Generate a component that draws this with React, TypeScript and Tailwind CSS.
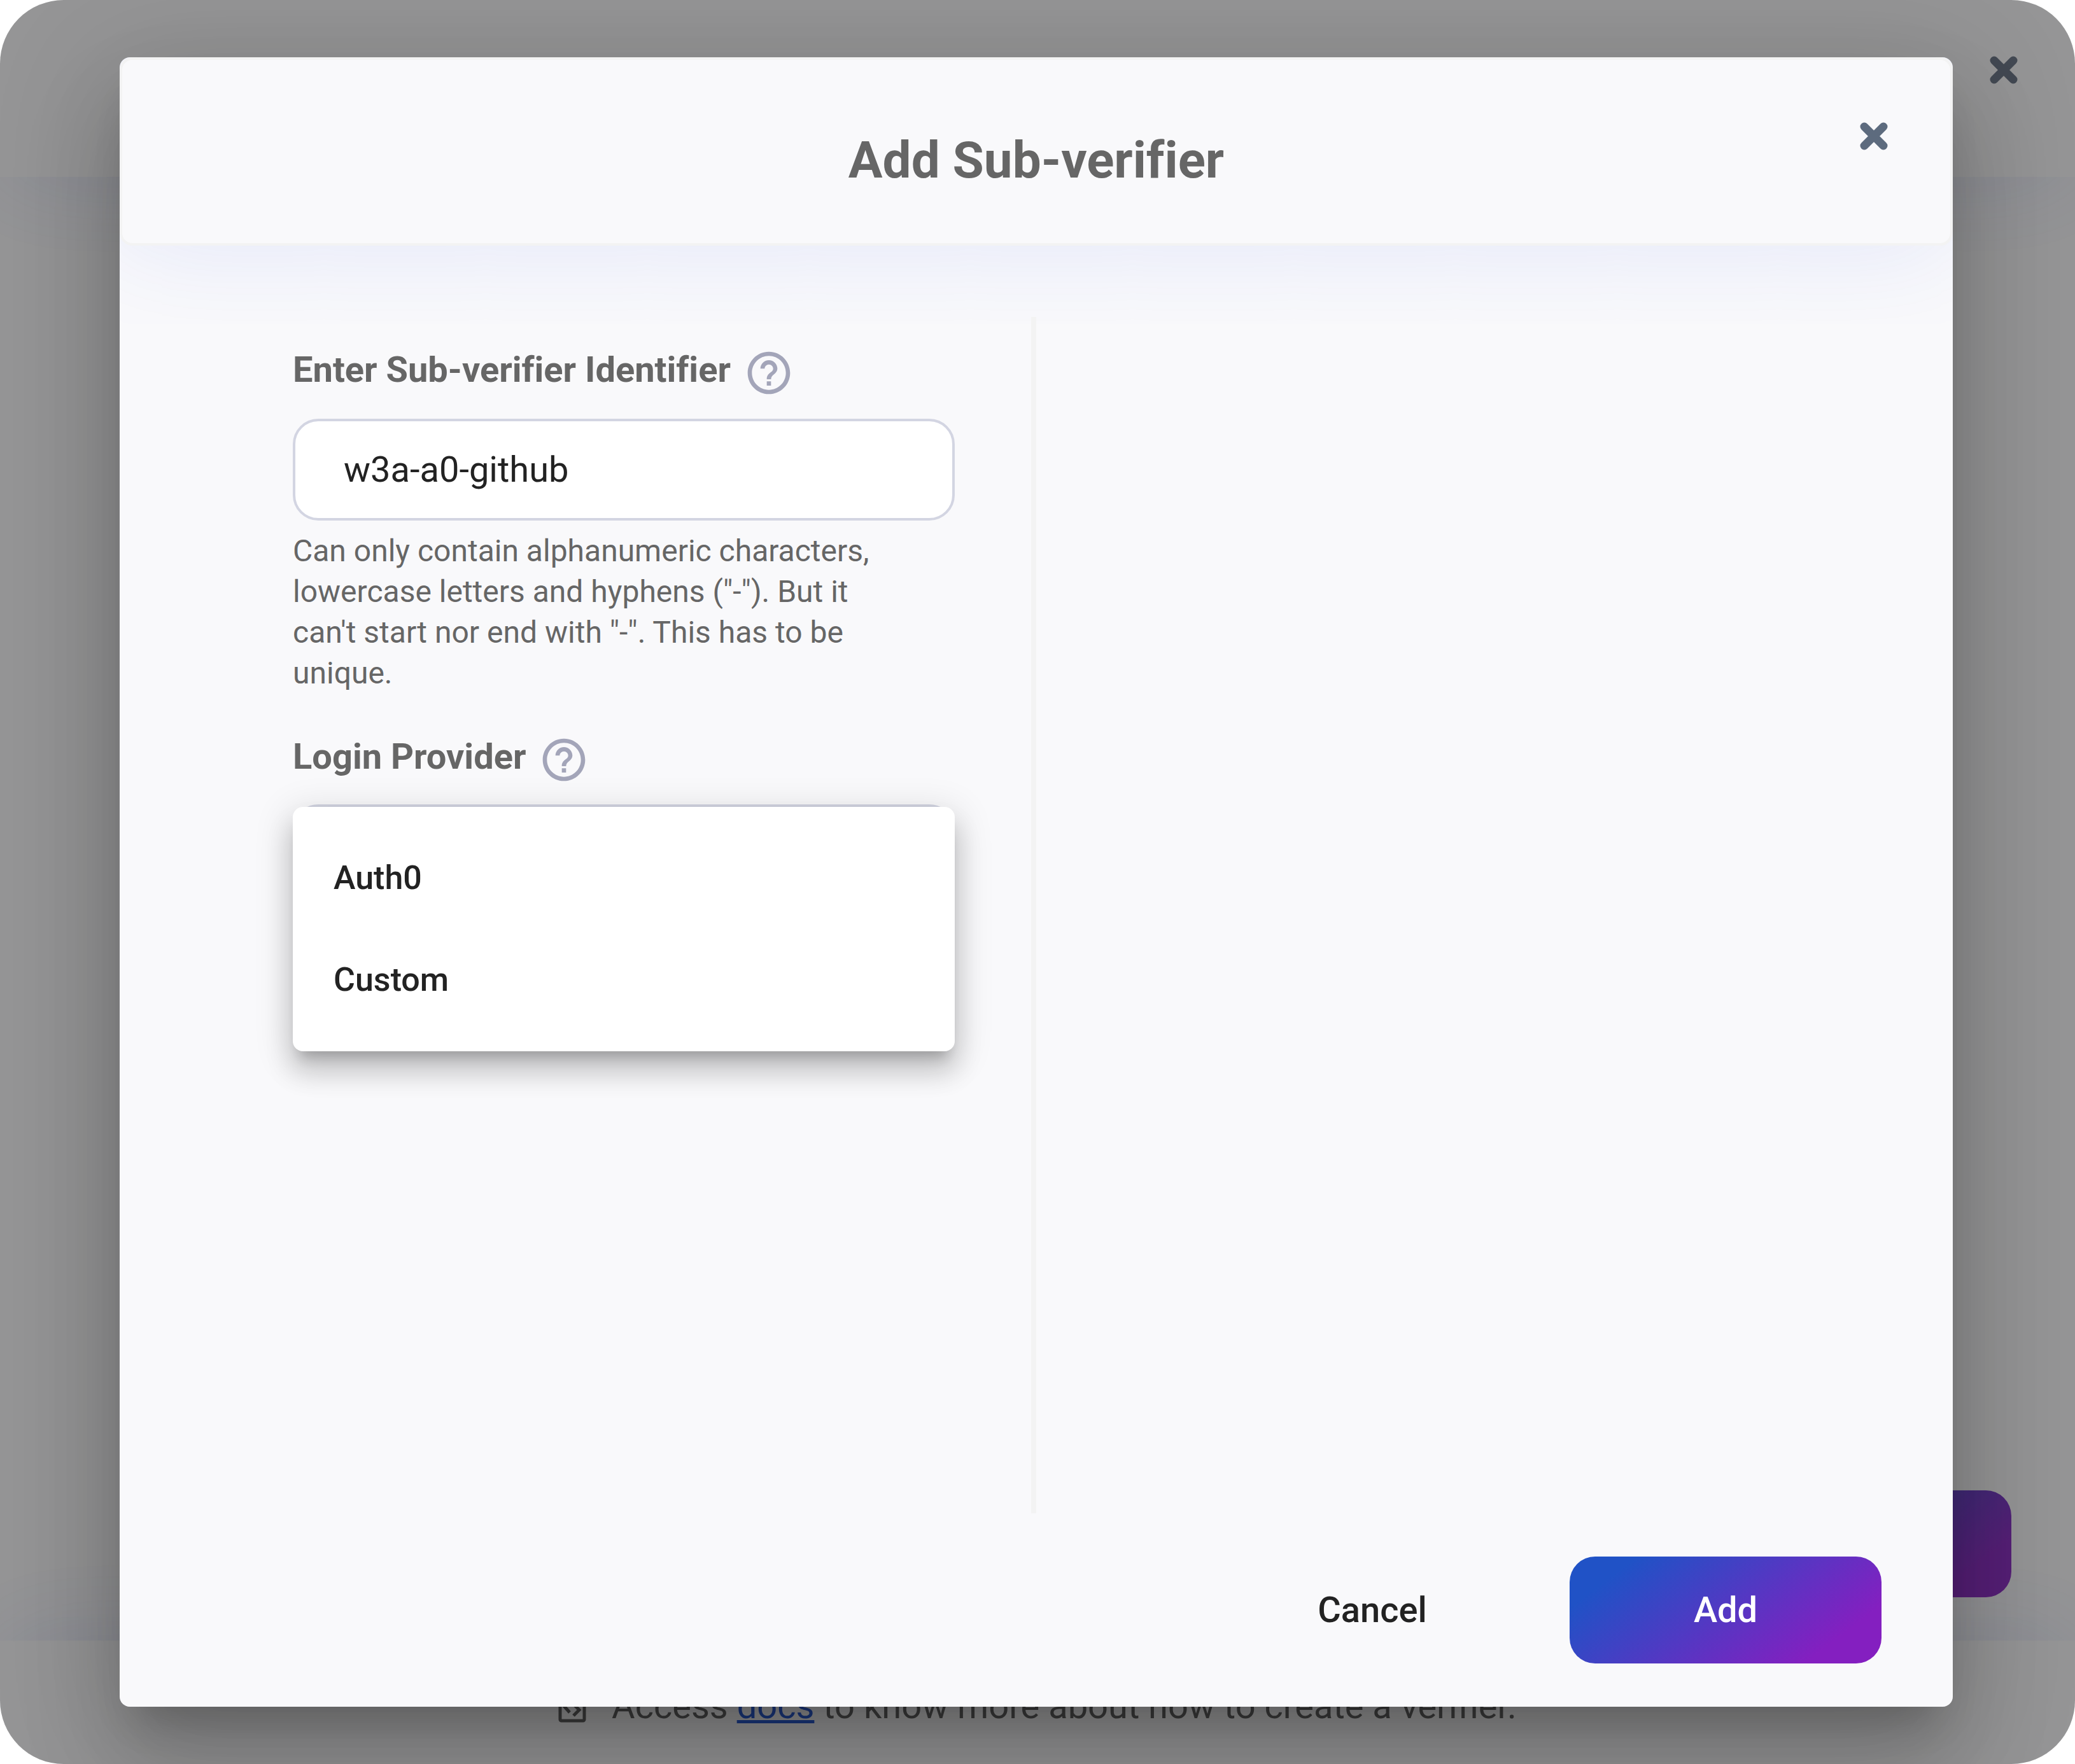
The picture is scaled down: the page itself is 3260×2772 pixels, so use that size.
import { MdHelpOutline } from "react-icons/md";

function CloseIcon() {
  return (
    <svg viewBox="0 0 44 44" className="size-11" aria-hidden="true">
      <path
        d="M7 7 37 37M37 7 7 37"
        fill="none"
        stroke="currentColor"
        strokeWidth="13"
        strokeLinecap="round"
      />
    </svg>
  );
}

function DocIcon() {
  return (
    <svg viewBox="0 0 44 52" className="h-13 w-11" fill="none" stroke="currentColor" aria-hidden="true">
      <rect x="3" y="3" width="38" height="46" rx="2" strokeWidth="5" />
      <path d="M18 18 10 27 18 36M24 23 33 32 24 41" strokeWidth="5" />
    </svg>
  );
}

function HelpButton({ label }: { label: string }) {
  return (
    <button type="button" aria-label={label} className="text-[#a3a5b9]">
      <MdHelpOutline className="size-20" />
    </button>
  );
}

const providers = ["Auth0", "Custom"];

function Backdrop() {
  return (
    <div className="absolute inset-0 flex flex-col bg-[#f9f9fa]" aria-hidden="true">
      <header className="flex h-[278px] shrink-0 items-start justify-end px-[90px] pt-[88px] shadow-[0_0_160px_rgba(50,80,240,0.12)]">
        <button type="button" tabIndex={-1} className="text-[#707b8a]">
          <CloseIcon />
        </button>
      </header>
      <main className="flex flex-1 items-end justify-end px-[100px] pb-[68px]">
        <button
          type="button"
          tabIndex={-1}
          className="h-[168px] w-[490px] rounded-[40px] bg-[linear-gradient(143deg,#2052c6_15%,#841fc0_83%)] text-[56px] font-medium text-white opacity-90"
        >
          Save
        </button>
      </main>
      <footer className="flex h-[194px] shrink-0 items-start justify-center bg-[#f9f9fa] pt-[68px] shadow-[0_0_160px_rgba(50,80,240,0.12)]">
        <p className="flex items-center gap-10 text-[56px] leading-[70px] text-[#666]">
          <DocIcon />
          <span>
            Access{" "}
            <a href="#docs" tabIndex={-1} className="text-[#3060d8] underline">
              docs
            </a>{" "}
            to know more about how to create a verifier.
          </span>
        </p>
      </footer>
      <div className="absolute inset-0 bg-black/40" />
    </div>
  );
}

function AddSubVerifierDialog() {
  return (
    <section
      role="dialog"
      aria-labelledby="dialog-title"
      className="relative flex flex-1 flex-col overflow-hidden rounded-2xl bg-[#f9f9fb]"
    >
      <header className="relative flex h-[296px] shrink-0 items-center justify-center rounded-[20px] border-4 border-[#f3f3f3] bg-[#f9f9fb] pt-7 shadow-[0_0_160px_rgba(50,80,240,0.12)]">
        <h1 id="dialog-title" className="text-[80px] leading-[96px] font-bold text-[#666]">
          Add Sub-verifier
        </h1>
        <button type="button" aria-label="Close" className="absolute top-[98px] right-[98px] text-[#5d6b7e]">
          <CloseIcon />
        </button>
      </header>

      <div className="relative flex flex-1 pt-28">
        <div className="flex w-1/2 justify-end border-r-8 border-[#f3f3f3] pr-[120px]">
          <form className="w-[1040px] pt-12">
            <div className="mb-8 flex items-start gap-5">
              <label htmlFor="identifier" className="text-[56px] leading-[70px] font-bold text-[#666]">
                Enter Sub-verifier Identifier
              </label>
              <HelpButton label="About the identifier" />
            </div>
            <input
              id="identifier"
              type="text"
              defaultValue="w3a-a0-github"
              className="h-40 w-full rounded-[40px] border-4 border-[#d3d5e2] bg-white px-[76px] text-[56px] text-[#222]"
            />
            <p className="mt-4 text-[48px] leading-[64px] text-[#666]">
              Can only contain alphanumeric characters,
              <br />
              lowercase letters and hyphens ("-"). But it
              <br />
              can't start nor end with "-". This has to be
              <br />
              unique.
            </p>
            <div className="mt-16 mb-[30px] flex items-start gap-5">
              <label htmlFor="provider" className="text-[56px] leading-[70px] font-bold text-[#666]">
                Login Provider
              </label>
              <HelpButton label="About login providers" />
            </div>
            <div className="relative">
              <select
                id="provider"
                defaultValue=""
                className="h-40 w-full appearance-none rounded-[40px] border-4 border-[#d3d5e2] bg-white px-[76px] text-[56px]"
              >
                <option value="" />
                {providers.map((name) => (
                  <option key={name}>{name}</option>
                ))}
              </select>
              <ul
                role="listbox"
                aria-label="Login Provider"
                className="absolute inset-x-0 top-1 rounded-2xl bg-white py-8 shadow-[0_20px_20px_-12px_rgba(0,0,0,0.2),0_32px_40px_4px_rgba(0,0,0,0.14),0_12px_56px_8px_rgba(0,0,0,0.12)]"
              >
                {providers.map((name) => (
                  <li
                    key={name}
                    role="option"
                    aria-selected="false"
                    className="flex h-40 items-center px-16 text-[52px] font-medium text-[#222]"
                  >
                    {name}
                  </li>
                ))}
              </ul>
            </div>
          </form>
        </div>
      </div>

      <footer className="flex justify-end px-28 py-[68px]">
        <button type="button" className="h-[168px] w-[620px] text-[56px] font-medium text-[#222]">
          Cancel
        </button>
        <button
          type="button"
          className="h-[168px] w-[490px] rounded-[40px] bg-[linear-gradient(143deg,#2052c6_15%,#841fc0_83%)] text-[56px] font-medium text-white"
        >
          Add
        </button>
      </footer>
    </section>
  );
}

export default function App() {
  return (
    <div className="bg-white font-['Roboto',sans-serif] [font-variant-ligatures:none]">
      <div className="relative flex min-h-screen overflow-hidden rounded-[100px]">
        <Backdrop />
        <div className="relative my-[90px] mr-[192px] ml-[188px] flex flex-1 rounded-2xl shadow-[0_44px_60px_-28px_rgba(0,0,0,0.2),0_96px_152px_12px_rgba(0,0,0,0.14),0_36px_184px_32px_rgba(0,0,0,0.12)]">
          <AddSubVerifierDialog />
        </div>
      </div>
    </div>
  );
}
